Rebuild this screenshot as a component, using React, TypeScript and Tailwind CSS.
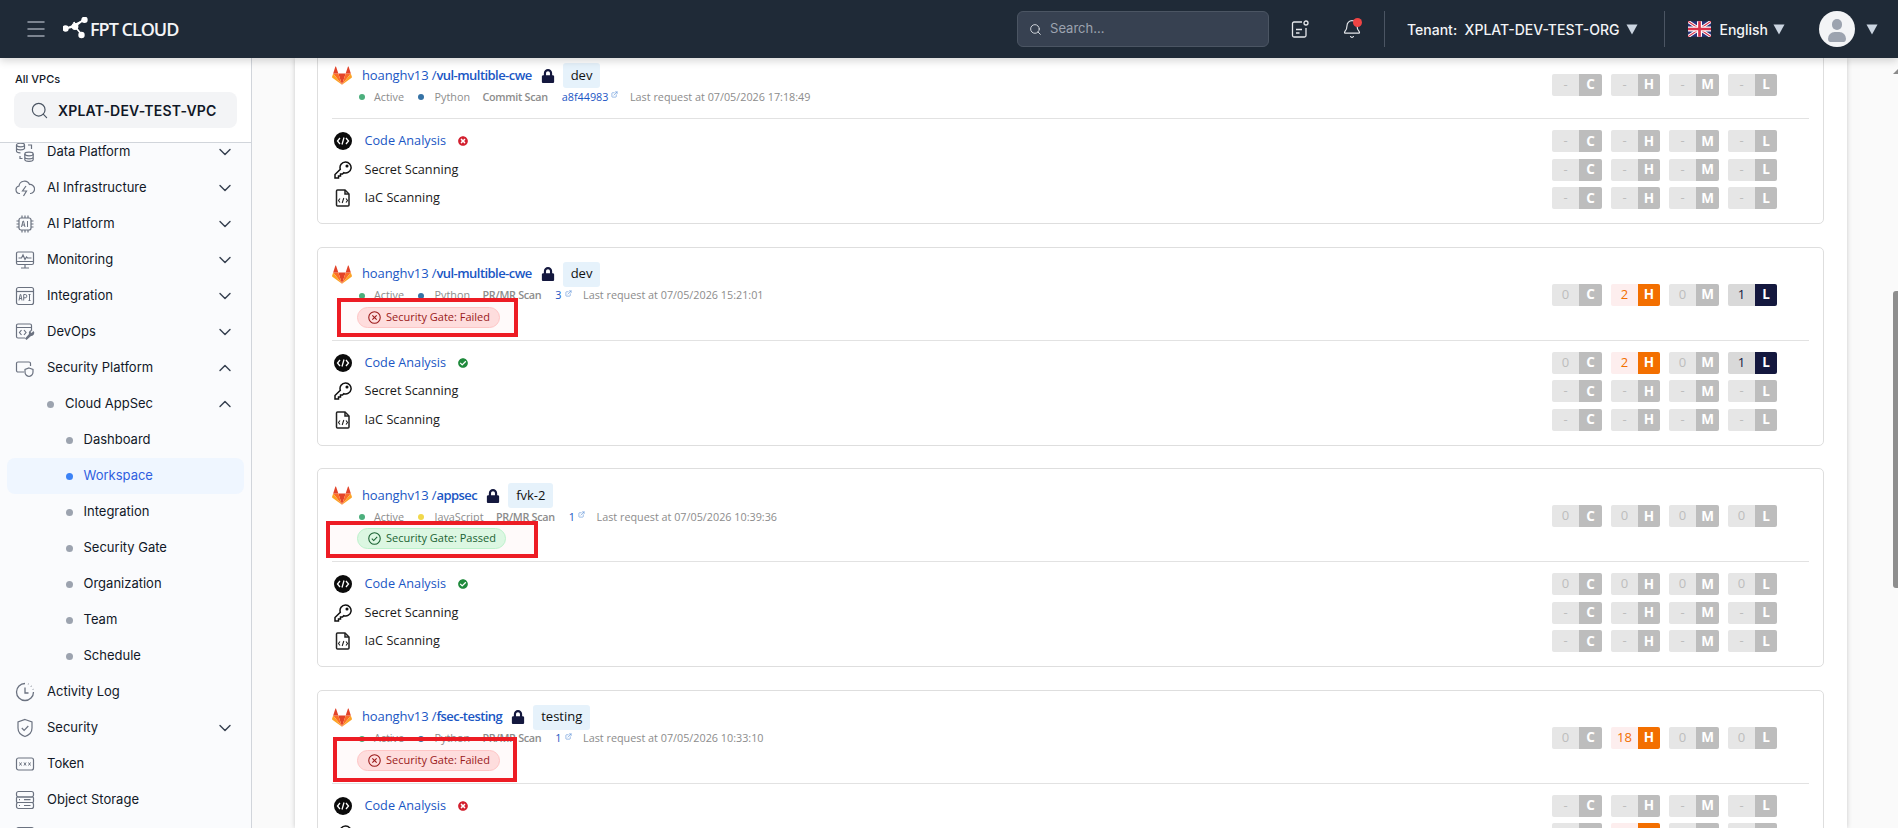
import { Bell, ChevronDown, ChevronUp, ExternalLink, Menu, Search } from "lucide-react";
import { FaCheckCircle, FaLock, FaTimesCircle } from "react-icons/fa";
import type { ReactNode } from "react";

const ico = "w-5 h-5 text-[#6b7280] shrink-0";

function Svg({ children }: { children: ReactNode }) {
  return (
    <svg viewBox="0 0 20 20" fill="none" stroke="currentColor" strokeWidth="1.2" className={ico}>
      {children}
    </svg>
  );
}

const icons: Record<string, ReactNode> = {
  data: (
    <Svg>
      <ellipse cx="5.5" cy="3" rx="4" ry="1.8" />
      <path d="M1.5 3v6c0 1 1.8 1.8 4 1.8M9.5 3v4M1.5 6c0 1 1.8 1.8 4 1.8s4-.8 4-1.8" />
      <ellipse cx="14" cy="12" rx="4.2" ry="1.8" />
      <path d="M9.8 12v5.5c0 1 1.9 1.8 4.2 1.8s4.2-.8 4.2-1.8V12M9.8 15c0 1 1.9 1.8 4.2 1.8s4.2-.8 4.2-1.8M13 3h3.5v4M5 14v2.500h2.500" />
    </Svg>
  ),
  ai: (
    <Svg>
      <path d="M5 15.500H4.500a3.800 3.800 0 0 1-.5-7.500 5.500 5.500 0 0 1 10.500-1.500 4.500 4.500 0 0 1 1 9H15" />
      <path d="M11 8l-3.500 5h4L8.500 18" />
    </Svg>
  ),
  chip: (
    <Svg>
      <rect x="4" y="4" width="12" height="12" rx="2" />
      <path d="M7 1.500V4M10 1.500V4M13 1.500V4M7 16v2.500M10 16v2.500M13 16v2.500M1.500 7H4M1.500 10H4M1.500 13H4M16 7h2.500M16 10h2.500M16 13h2.500" />
      <path d="M6.500 13l1.500-6h.5l1.500 6M7 11h2.500M12.500 7v6" strokeWidth="1" />
    </Svg>
  ),
  monitor: (
    <Svg>
      <rect x="1.500" y="2" width="17" height="12.500" rx="1.500" />
      <path d="M1.500 11.500h17M10 14.500v3M6 18h8M3.500 8h3l1.500-3 2 4.500 1.500-2.500 1 1h4" />
    </Svg>
  ),
  api: (
    <Svg>
      <rect x="1.500" y="1.500" width="17" height="17" rx="2" />
      <path d="M1.500 5.500h17" />
      <path d="M4 14.500l1.200-6h.6l1.200 6M4.400 12.500h2.200M8.700 14.500v-6h1.500a1.500 1.500 0 0 1 0 3.300H8.700M13.500 8.500h2M14.500 8.500v6M13.500 14.500h2" strokeWidth="1" />
    </Svg>
  ),
  devops: (
    <Svg>
      <path d="M10 16H3a1.500 1.500 0 0 1-1.500-1.500v-11A1.500 1.500 0 0 1 3 2h12a1.500 1.500 0 0 1 1.500 1.500V8M1.500 5.500h15" />
      <path d="M6.500 8L4.500 10.500l2 2.500M9 8l2 2.500-2 2.500" />
      <path d="M18.500 9l-2 2-1-1 2-2a3 3 0 0 0-3.500 4l-4 4.500 1.500 1.500 4.500-4a3 3 0 0 0 2.500-5z" fill="currentColor" stroke="none" />
    </Svg>
  ),
  secplat: (
    <Svg>
      <path d="M9 14H3a1.500 1.500 0 0 1-1.500-1.500v-7A1.500 1.500 0 0 1 3 4h11a1.500 1.500 0 0 1 1.500 1.500V8" />
      <path d="M14 10l4 1.500v2.500c0 2.500-1.800 4-4 4.500-2.200-.5-4-2-4-4.500v-2.500z" fill="#fafbfd" />
    </Svg>
  ),
  clock: (
    <Svg>
      <path d="M18.500 10A8.500 8.500 0 1 1 10 1.500" strokeWidth="1.300" />
      <path d="M10 5.500V11h3.500" strokeWidth="1.300" />
      <path d="M13 2l.5.2M16 4l.4.400M18 7l.2.500" strokeWidth="1.400" />
    </Svg>
  ),
  shield: (
    <Svg>
      <path d="M10 1.500l7 2.500v6c0 4.500-3.200 7.200-7 8.500-3.800-1.300-7-4-7-8.500V4z" />
      <path d="M6.800 10l2.300 2.300 4.200-4.300" />
    </Svg>
  ),
  token: (
    <Svg>
      <rect x="1.500" y="4" width="17" height="12" rx="2" />
      <path d="M4.500 8.500l2 3M6.500 8.500l-2 3M9 8.500l2 3M11 8.500l-2 3M13.500 8.500l2 3M15.500 8.500l-2 3" strokeWidth="1" />
    </Svg>
  ),
  storage: (
    <Svg>
      <rect x="1.500" y="1.500" width="17" height="5.500" rx="2" />
      <rect x="1.500" y="7" width="17" height="5.500" rx="1" />
      <rect x="1.500" y="12.500" width="17" height="6" rx="2" />
      <path d="M9 9.700h6.500M9 15.500h6.500M4 9.700h1M4 15.500h1" />
    </Svg>
  ),
};

function NavRow({ icon, label, chevron }: { icon: string; label?: string; chevron?: "up" | "down" }) {
  return (
    <div className="h-9 flex items-center pl-[15px] pr-[16px] text-[#111827]">
      {icons[icon]}
      {label && <span className="ml-3">{label}</span>}
      {chevron === "down" && <ChevronDown size={20} strokeWidth={1.7} className="ml-auto text-[#374151]" />}
      {chevron === "up" && <ChevronUp size={20} strokeWidth={1.7} className="ml-auto text-[#374151]" />}
    </div>
  );
}

function SubRow({ label, active }: { label: string; active?: boolean }) {
  return (
    <div
      className={
        active
          ? "h-9 mx-[7px] flex items-center pl-[58.500px] rounded-lg bg-[#eff6ff] text-[#2f5fe0]"
          : "h-9 mx-[7px] flex items-center pl-[58.500px] text-[#111827]"
      }
    >
      <span className={active ? "w-[7px] h-[7px] rounded-full bg-[#3b82f6]" : "w-[7px] h-[7px] rounded-full bg-[#9ca3af]"} />
      <span className="ml-[11px]">{label}</span>
    </div>
  );
}

function Sidebar() {
  return (
    <aside className="w-[252px] shrink-0 flex flex-col border-r border-[#d1d5db] bg-[#fafbfd] text-[13px] font-['Inter',sans-serif] overflow-hidden">
      <div className="h-[85px] shrink-0 bg-white border-b border-[#d1d5db] pl-[14px] pr-[14px] pt-[12px] relative z-[1]">
        <div className="text-[11px] font-medium leading-[18px] pl-px text-[#111827]">All VPCs</div>
        <div className="mt-[4px] h-9 rounded-lg bg-[#f3f4f6] flex items-center pl-4">
          <Search size={19} strokeWidth={1.5} className="text-[#4b5563]" />
          <span className="ml-[9px] text-[14px] font-semibold tracking-[0.2px] text-[#111827]">XPLAT-DEV-TEST-VPC</span>
        </div>
      </div>
      <div className="-mt-[9px]">
        <NavRow icon="data" label="Data Platform" chevron="down" />
        <NavRow icon="ai" label="AI Infrastructure" chevron="down" />
        <NavRow icon="chip" label="AI Platform" chevron="down" />
        <NavRow icon="monitor" label="Monitoring" chevron="down" />
        <NavRow icon="api" label="Integration" chevron="down" />
        <NavRow icon="devops" label="DevOps" chevron="down" />
        <NavRow icon="secplat" label="Security Platform" chevron="up" />
        <div className="h-9 flex items-center pl-[47px] pr-[16px] text-[#111827]">
          <span className="w-[7px] h-[7px] rounded-full bg-[#9ca3af]" />
          <span className="ml-[11px]">Cloud AppSec</span>
          <ChevronUp size={20} strokeWidth={1.7} className="ml-auto text-[#374151]" />
        </div>
        <SubRow label="Dashboard" />
        <SubRow label="Workspace" active />
        <SubRow label="Integration" />
        <SubRow label="Security Gate" />
        <SubRow label="Organization" />
        <SubRow label="Team" />
        <SubRow label="Schedule" />
        <NavRow icon="clock" label="Activity Log" />
        <NavRow icon="shield" label="Security" chevron="down" />
        <NavRow icon="token" label="Token" />
        <NavRow icon="storage" label="Object Storage" />
        <NavRow icon="storage" />
      </div>
    </aside>
  );
}

function Caret({ className }: { className: string }) {
  return (
    <svg viewBox="0 0 12 12" className={"w-3 h-3 shrink-0 " + className}>
      <path d="M.5 1.500h11L6 11.500z" fill="#cbd5e1" />
    </svg>
  );
}

function Header() {
  return (
    <header className="h-[58px] shrink-0 bg-[#1f2a37] flex items-center relative z-10 shadow-[0_3px_8px_rgba(0,0,0,0.16)] font-['Inter',sans-serif]">
      <Menu size={24} strokeWidth={1.5} className="ml-[24px] text-[#9ca3af]" />
      <div className="ml-[15px] flex items-center">
        <svg viewBox="0 0 26 24" className="w-[26px] h-[24px]">
          <g stroke="#fff" strokeWidth="1.800" fill="#fff">
            <path d="M2 11.500L12 9.500L21.500 2M12 9.500L19 18M12 9.500L11 5" />
            <circle cx="2.500" cy="11.500" r="2.300" />
            <circle cx="12" cy="9.500" r="2.500" />
            <circle cx="21.500" cy="2.800" r="2.300" />
            <circle cx="18.500" cy="18" r="2.300" />
          </g>
        </svg>
        <span className="ml-[1px] text-[18px] font-semibold tracking-[-1px] text-[#f3f4f6] font-['Open_Sans',sans-serif]">FPT CLOUD</span>
      </div>
      <div className="ml-auto pr-[20px] flex items-center text-[14px] font-medium text-[#f3f4f6]">
        <div className="w-[252px] h-9 rounded-md bg-[#374151] border border-[#4b5563] flex items-center pl-[11px]">
          <Search size={13} strokeWidth={1.8} className="text-[#d1d5db]" />
          <span className="ml-[8px] text-[13px] font-normal text-[#9ca3af]">Search...</span>
        </div>
        <svg viewBox="0 0 20 20" fill="none" stroke="#e5e7eb" strokeWidth="1.300" className="ml-[21px] w-5 h-5">
          <path d="M12 3H4a1.500 1.500 0 0 0-1.500 1.500v12A1.500 1.500 0 0 0 4 18h10.500a1.500 1.500 0 0 0 1.500-1.500V9" />
          <circle cx="16" cy="4" r="2" />
          <path d="M6 10.500h6M6 14h3.500" />
        </svg>
        <div className="ml-[32px] w-5 h-5 relative">
          <Bell size={20} strokeWidth={1.400} className="text-[#e5e7eb]" />
          <span className="absolute -top-[1px] right-0 w-[9px] h-[9px] rounded-full bg-[#ef4444]" />
        </div>
        <span className="ml-[22px] w-px h-9 bg-[#4b5563]" />
        <span className="ml-[22px] whitespace-pre">Tenant:  XPLAT-DEV-TEST-ORG</span>
        <Caret className="ml-[7px]" />
        <span className="ml-[26px] w-px h-9 bg-[#4b5563]" />
        <svg viewBox="0 0 60 40" className="ml-[23px] w-[23px] h-[16px]">
          <rect width="60" height="40" fill="#29337a" />
          <path d="M0 0L60 40M60 0L0 40" stroke="#fff" strokeWidth="8" />
          <path d="M0 0L60 40M60 0L0 40" stroke="#d8324a" strokeWidth="3" />
          <path d="M30 0V40M0 20H60" stroke="#fff" strokeWidth="13" />
          <path d="M30 0V40M0 20H60" stroke="#d8324a" strokeWidth="7" />
        </svg>
        <span className="ml-[8px]">English</span>
        <Caret className="ml-[5px]" />
        <div className="ml-[34px] w-9 h-9 rounded-full bg-[#f3f4f6] overflow-hidden flex flex-col items-center pt-[8px]">
          <span className="w-[10px] h-[11px] rounded-full bg-[#9ca3af]" />
          <span className="mt-[2px] w-[18px] h-[10px] rounded-t-[8px] rounded-b-[4px] bg-[#9ca3af]" />
        </div>
        <Caret className="ml-[11px]" />
      </div>
    </header>
  );
}

function GitlabLogo() {
  return (
    <svg viewBox="0 0 24 22" className="w-5 h-[19px] shrink-0">
      <path d="M12 22L16.400 8.500H7.600z" fill="#e24329" />
      <path d="M12 22L7.600 8.500H1.400z" fill="#fc6d26" />
      <path d="M1.400 8.500L.1 12.600c-.1.400 0 .800.300 1L12 22z" fill="#fca326" />
      <path d="M1.400 8.500h6.200L4.900.6c-.1-.4-.7-.4-.9 0z" fill="#e24329" />
      <path d="M12 22l4.400-13.500h6.200z" fill="#fc6d26" />
      <path d="M22.600 8.500l1.300 4.100c.1.400 0 .800-.3 1L12 22z" fill="#fca326" />
      <path d="M22.600 8.500h-6.200L19.100.6c.1-.4.700-.4.900 0z" fill="#e24329" />
    </svg>
  );
}

const letterWidth: Record<string, string> = {
  C: "w-[23px]",
  H: "w-[22px]",
  M: "w-[23px]",
  L: "w-[22px]",
};

function Sev({ letter, value }: { letter: string; value: string }) {
  let box = "bg-[#e6e6e6] text-[#bdbdbd]";
  let tag = "bg-[#bdbdbd]";
  if (letter === "H" && value !== "-" && value !== "0") {
    box = "bg-[#fdeeee] text-[#f36f00]";
    tag = "bg-[#f36f00]";
  }
  if (letter === "L" && value !== "-" && value !== "0") {
    box = "bg-[#d9d9d9] text-[#14183e]";
    tag = "bg-[#14183e]";
  }
  return (
    <div className="flex h-[22px] rounded-[2px] overflow-hidden">
      <span className={"w-[27px] flex items-center justify-center text-[13px] " + box}>{value}</span>
      <span className={"flex items-center justify-center text-[13.500px] font-bold text-white " + letterWidth[letter] + " " + tag}>
        {letter}
      </span>
    </div>
  );
}

function SevGroup({ values }: { values: string[] }) {
  return (
    <div className="flex gap-[9px]">
      {["C", "H", "M", "L"].map((l, i) => (
        <Sev key={l} letter={l} value={values[i]} />
      ))}
    </div>
  );
}

const dash = ["-", "-", "-", "-"];

function CodeIcon() {
  return (
    <svg viewBox="0 0 18 18" className="w-[18px] h-[18px] shrink-0">
      <circle cx="9" cy="9" r="9" fill="#0b0b0b" />
      <path d="M6 6L3.500 9 6 12M12 6l2.500 3L12 12M10 5.500L8 12.500" stroke="#fff" strokeWidth="1.300" fill="none" />
    </svg>
  );
}

function KeyIcon() {
  return (
    <svg viewBox="0 0 18 18" fill="none" stroke="#111" strokeWidth="1.500" className="w-[18px] h-[18px] shrink-0">
      <path d="M11.500 1a5.500 5.500 0 0 0-5.200 7.200L1 13.500V17h3.500v-2H6.500v-2h2l1.300-1.300A5.500 5.500 0 1 0 11.500 1z" />
      <circle cx="13" cy="5" r=".8" fill="#111" />
    </svg>
  );
}

function FileIcon() {
  return (
    <svg viewBox="0 0 18 18" fill="none" stroke="#222" strokeWidth="1.500" className="w-[18px] h-[18px] shrink-0">
      <path d="M3.500 1h7.500l4 4v11a1 1 0 0 1-1 1h-10.500a1 1 0 0 1-1-1V2a1 1 0 0 1 1-1z" />
      <path d="M11 1v4h4" />
      <path d="M6 9.500L4.500 11.500 6 13.500M12 9.500l1.500 2-1.500 2M9.800 9l-1.600 5" strokeWidth="1.100" />
    </svg>
  );
}

function ToolRow({ icon, label, status, values }: { icon: ReactNode; label: string; status?: "ok" | "fail"; values: string[] }) {
  return (
    <div className="h-[22px] flex items-center pr-[32px]">
      <span className="w-[32.500px] pl-[2px]">{icon}</span>
      <span className={status ? "text-[12.700px] text-[#1a56c4]" : "text-[12.700px] text-[#1a1a1a]"}>{label}</span>
      {status === "fail" && <FaTimesCircle size={10} className="ml-[12px] text-[#d3202f]" />}
      {status === "ok" && <FaCheckCircle size={10} className="ml-[12px] text-[#1f8a3c]" />}
      <div className="ml-auto">
        <SevGroup values={values} />
      </div>
    </div>
  );
}

type RepoCard = {
  repo: string;
  branch: string;
  lang: string;
  langDot: string;
  scan: string;
  ref: string;
  time: string;
  gate?: "Failed" | "Passed";
  head: string[];
  status: "ok" | "fail";
  code: string[];
  secret: string[];
  rect?: string;
};

function Card({ c }: { c: RepoCard }) {
  return (
    <div className="relative border border-[#dedede] rounded-[5px] bg-white px-[14px] pt-[14px] pb-[14px] font-['Open_Sans',sans-serif]">
      <div className="flex items-center justify-between pr-[32px]">
        <div>
          <div className="flex items-center h-[25px]">
            <GitlabLogo />
            <span className="ml-[10px] text-[13px] text-[#1a56c4] tracking-[-0.1px]">
              hoanghv13 /<span className="font-semibold tracking-[-0.55px]">{c.repo}</span>
            </span>
            <FaLock size={14} className="ml-[9px] text-[#14183e]" />
            <span className="ml-[8px] h-[25px] px-[8px] rounded-[3px] bg-[#e6f2fb] text-[13px] text-[#111] flex items-center">{c.branch}</span>
          </div>
          <div className="h-[18px] pl-[27px] flex items-center text-[10.800px] text-[#8c8c8c]">
            <span className="w-[6px] h-[6px] rounded-full bg-[#4caf7d]" />
            <span className="ml-[9px]">Active</span>
            <span className={"ml-[14px] w-[6px] h-[6px] rounded-full " + c.langDot} />
            <span className="ml-[10.500px]">{c.lang}</span>
            <span className="ml-[12.500px] font-semibold tracking-[-0.3px]">{c.scan}</span>
            <span className="ml-[14px] text-[#1a56c4]">{c.ref}</span>
            <ExternalLink size={7} strokeWidth={2} className="ml-[3px] -mt-[5px] text-[#5a8fd8]" />
            <span className="ml-[11.500px]">Last request at {c.time}</span>
          </div>
          {c.gate === "Failed" && (
            <div className="mt-[2px] ml-[25px] h-[21px] w-fit pl-[10px] pr-[9px] rounded-full bg-[#fee2e2] border border-[#fecaca] text-[#991b1b] flex items-center text-[11px] font-medium">
              <svg viewBox="0 0 12 12" fill="none" stroke="currentColor" strokeWidth="1" className="w-[13px] h-[13px]">
                <circle cx="6" cy="6" r="5.300" />
                <path d="M4 4l4 4M8 4l-4 4" />
              </svg>
              <span className="ml-[5px]">Security Gate: Failed</span>
            </div>
          )}
          {c.gate === "Passed" && (
            <div className="mt-[2px] ml-[25px] h-[21px] w-fit pl-[10px] pr-[9px] rounded-full bg-[#dcfce7] border border-[#bbf7d0] text-[#166534] flex items-center text-[11px] font-medium">
              <svg viewBox="0 0 12 12" fill="none" stroke="currentColor" strokeWidth="1" className="w-[13px] h-[13px]">
                <circle cx="6" cy="6" r="5.300" />
                <path d="M3.500 6.200l1.800 1.700 3.200-3.500" />
              </svg>
              <span className="ml-[5px]">Security Gate: Passed</span>
            </div>
          )}
        </div>
        <SevGroup values={c.head} />
      </div>
      <div className="mt-[12px] mb-[11px] h-px bg-[#e2e2e2]" />
      <div className="flex flex-col gap-[6.500px]">
        <ToolRow icon={<CodeIcon />} label="Code Analysis" status={c.status} values={c.code} />
        <ToolRow icon={<KeyIcon />} label="Secret Scanning" values={c.secret} />
        <ToolRow icon={<FileIcon />} label="IaC Scanning" values={dash} />
      </div>
      {c.rect && <div className={"absolute border-[4px] border-[#ed1c24] bg-[#ff000005] " + c.rect} />}
    </div>
  );
}

const cards: RepoCard[] = [
  {
    repo: "vul-multible-cwe",
    branch: "dev",
    lang: "Python",
    langDot: "bg-[#3572a5]",
    scan: "Commit Scan",
    ref: "a8f44983",
    time: "07/05/2026 17:18:49",
    head: dash,
    status: "fail",
    code: dash,
    secret: dash,
  },
  {
    repo: "vul-multible-cwe",
    branch: "dev",
    lang: "Python",
    langDot: "bg-[#3572a5]",
    scan: "PR/MR Scan",
    ref: "3",
    time: "07/05/2026 15:21:01",
    gate: "Failed",
    head: ["0", "2", "0", "1"],
    status: "ok",
    code: ["0", "2", "0", "1"],
    secret: dash,
    rect: "left-[19px] top-[50.500px] w-[181px] h-[39px]",
  },
  {
    repo: "appsec",
    branch: "fvk-2",
    lang: "JavaScript",
    langDot: "bg-[#f1d84b]",
    scan: "PR/MR Scan",
    ref: "1",
    time: "07/05/2026 10:39:36",
    gate: "Passed",
    head: ["0", "0", "0", "0"],
    status: "ok",
    code: ["0", "0", "0", "0"],
    secret: dash,
    rect: "left-[8px] top-[52px] w-[212px] h-[37px]",
  },
  {
    repo: "fsec-testing",
    branch: "testing",
    lang: "Python",
    langDot: "bg-[#3572a5]",
    scan: "PR/MR Scan",
    ref: "1",
    time: "07/05/2026 10:33:10",
    gate: "Failed",
    head: ["0", "18", "0", "0"],
    status: "fail",
    code: dash,
    secret: ["0", "18", "0", "0"],
    rect: "left-[15px] top-[46.500px] w-[184px] h-[45px]",
  },
];

export default function App() {
  return (
    <div className="w-[1898px] h-[828px] overflow-hidden flex flex-col bg-[#fafafa]">
      <Header />
      <div className="flex flex-1 min-h-0">
        <Sidebar />
        <main className="flex-1 flex min-w-0 pl-[43px] bg-[#fafafa]">
          <div className="w-[1552px] shrink-0 bg-white shadow-[0_0_5px_rgba(0,0,0,0.2)] pl-[22px] pr-[23px] overflow-hidden">
            <div className="-mt-[10px] flex flex-col gap-[22.500px]">
              {cards.map((c, i) => (
                <Card key={i} c={c} />
              ))}
            </div>
          </div>
          <div className="ml-auto w-[5px] pt-[11px] flex flex-col">
            <svg viewBox="0 0 5 5" className="w-[5px] h-[5px]">
              <path d="M5 0v5H0z" fill="#8a8a8a" />
            </svg>
            <div className="mt-[217px] h-[297px] rounded-l-[3px] bg-[#8e8e8e]" />
          </div>
        </main>
      </div>
    </div>
  );
}
